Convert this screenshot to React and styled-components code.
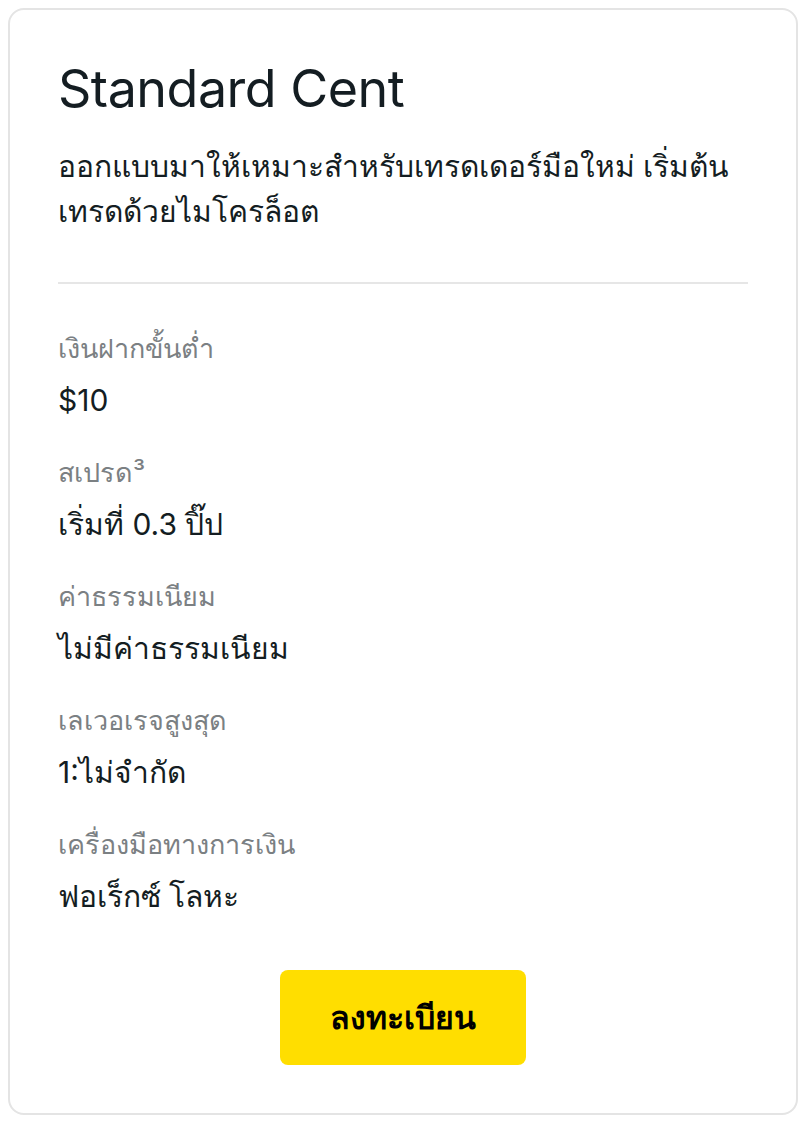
import styled, { createGlobalStyle } from "styled-components";

const GlobalStyle = createGlobalStyle`
    body {
        margin: 8px;
        background: #ffffff;
        font-family: "Inter", "Noto Sans", sans-serif;
        color: #141d22;
    }
`;

const Card = styled.div`
    box-sizing: border-box;
    width: 790px;
    border: 2px solid #e4e4e4;
    border-radius: 16px;
    padding: 48px;
    display: flex;
    flex-direction: column;
`;

const Title = styled.h2`
    margin: 0;
    font-size: 52px;
    font-weight: 400;
    line-height: 1.2;
    letter-spacing: -0.5px;
`;

const Description = styled.p`
    margin: 24px 0 0;
    font-size: 30px;
    line-height: 45px;
`;

const Divider = styled.hr`
    margin: 48px 0 0;
    border: none;
    border-top: 2px solid #e6e6e6;
`;

const Specs = styled.div`
    display: flex;
    flex-direction: column;
    gap: 27px;
    margin-top: 42px;
`;

const Spec = styled.div`
    display: flex;
    flex-direction: column;
    gap: 7px;
`;

const Label = styled.span`
    font-size: 27px;
    line-height: 45px;
    color: #7b8083;
`;

const Value = styled.span`
    font-size: 30px;
    line-height: 45px;
    color: #141d22;
`;

const Button = styled.button`
    align-self: center;
    margin-top: 51px;
    width: 246px;
    height: 95px;
    border: none;
    border-radius: 8px;
    background: #ffde00;
    color: #000;
    font-family: inherit;
    font-size: 32px;
    font-weight: 600;
    cursor: pointer;
`;

const specs = [
    { label: "เงินฝากขั้นต่ำ", value: "$10" },
    { label: "สเปรด³", value: "เริ่มที่ 0.3 ปิ๊ป" },
    { label: "ค่าธรรมเนียม", value: "ไม่มีค่าธรรมเนียม" },
    { label: "เลเวอเรจสูงสุด", value: "1:ไม่จำกัด" },
    { label: "เครื่องมือทางการเงิน", value: "ฟอเร็กซ์ โลหะ" },
];

function App() {
    return (
        <>
            <GlobalStyle />
            <Card>
                <Title>Standard Cent</Title>
                <Description>
                    ออกแบบมาให้เหมาะสำหรับเทรดเดอร์มือใหม่ เริ่มต้น
                    <br />
                    เทรดด้วยไมโครล็อต
                </Description>
                <Divider />
                <Specs>
                    {specs.map((obj) => (
                        <Spec key={obj.label}>
                            <Label>{obj.label}</Label>
                            <Value>{obj.value}</Value>
                        </Spec>
                    ))}
                </Specs>
                <Button>ลงทะเบียน</Button>
            </Card>
        </>
    );
}

export default App;
